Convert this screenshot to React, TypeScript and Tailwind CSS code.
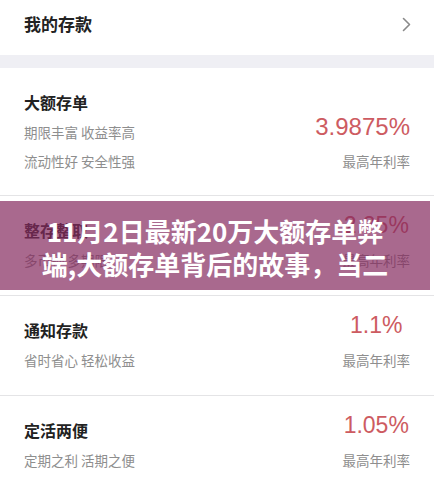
const cjk = { fontFamily: '"Noto Sans CJK SC", "Noto Sans", sans-serif' };
const num = { fontFamily: '"Liberation Sans", "Noto Sans CJK SC", sans-serif' };

type Row = { title: string; lines: string[]; rate: string };

const rows: Row[] = [
  { title: '整存整取', lines: ['多币种 多期限'], rate: '2.25%' },
  { title: '通知存款', lines: ['省时省心 轻松收益'], rate: '1.1%' },
  { title: '定活两便', lines: ['定期之利 活期之便'], rate: '1.05%' },
];

function Chevron() {
  return (
    <svg width="9" height="15" viewBox="0 0 9 15" fill="none">
      <polyline points="1.5,1.5 7.5,7.5 1.5,13.5" stroke="#8a8a8a" strokeWidth="1.6" strokeLinecap="round" strokeLinejoin="round" />
    </svg>
  );
}

function DepositRow({ row, children }: { row: Row; children?: React.ReactNode }) {
  return (
    <div className="relative flex justify-between h-[100px] px-[24px] border-b border-[#e4e4e6]">
      <div className="pt-[23px]">
        <div className="text-[16px] leading-[22px] font-bold text-[#222]">{row.title}</div>
        {row.lines.map((l, i) => (
          <div key={i} className="mt-[9px] text-[13.5px] leading-[20px] text-[#8e8e8e]">{l}</div>
        ))}
      </div>
      <div className="pt-[15px] flex flex-col items-center">
        <div style={num} className="text-[23px] leading-[28px] text-[#cd5b61]">{row.rate}</div>
        <div className="mt-[11px] text-[13.5px] leading-[20px] text-[#8e8e8e]">最高年利率</div>
      </div>
      {children}
    </div>
  );
}

export default function App() {
  return (
    <div style={cjk} className="w-[434px] h-[493px] overflow-hidden bg-white">
      {/* header */}
      <div className="flex items-center justify-between h-[55px] pb-[7px] pl-[24px] pr-[23px]">
        <span className="text-[17px] font-bold text-[#222]">我的存款</span>
        <Chevron />
      </div>
      <div className="h-[13px] bg-[#efeff4]" />

      {/* 大额存单 */}
      <div className="flex justify-between h-[128px] px-[24px] border-b border-[#e4e4e6]">
        <div className="pt-[23px]">
          <div className="text-[16px] leading-[22px] font-bold text-[#222]">大额存单</div>
          <div className="mt-[9px] text-[13.5px] leading-[20px] text-[#8e8e8e]">期限丰富 收益率高</div>
          <div className="mt-[9px] text-[13.5px] leading-[20px] text-[#8e8e8e]">流动性好 安全性强</div>
        </div>
        <div className="pt-[45px] flex flex-col items-end">
          <div style={num} className="text-[24px] leading-[28px] text-[#cd5b61]">3.9875%</div>
          <div className="mt-[10px] text-[13.5px] leading-[20px] text-[#8e8e8e]">最高年利率</div>
        </div>
      </div>

      <DepositRow row={rows[0]}>
        <div className="absolute left-0 right-[4px] top-[5px] bottom-[5px] bg-[#842a5e]/70 flex flex-col items-center justify-center pt-[3px]">
          <span className="whitespace-nowrap text-[26px] leading-[33px] font-bold text-white">11月2日最新20万大额存单弊</span>
          <span className="whitespace-nowrap text-[26px] leading-[33px] font-bold text-white">端,大额存单背后的故事，当二</span>
        </div>
      </DepositRow>
      <DepositRow row={rows[1]} />
      <DepositRow row={rows[2]} />
    </div>
  );
}
